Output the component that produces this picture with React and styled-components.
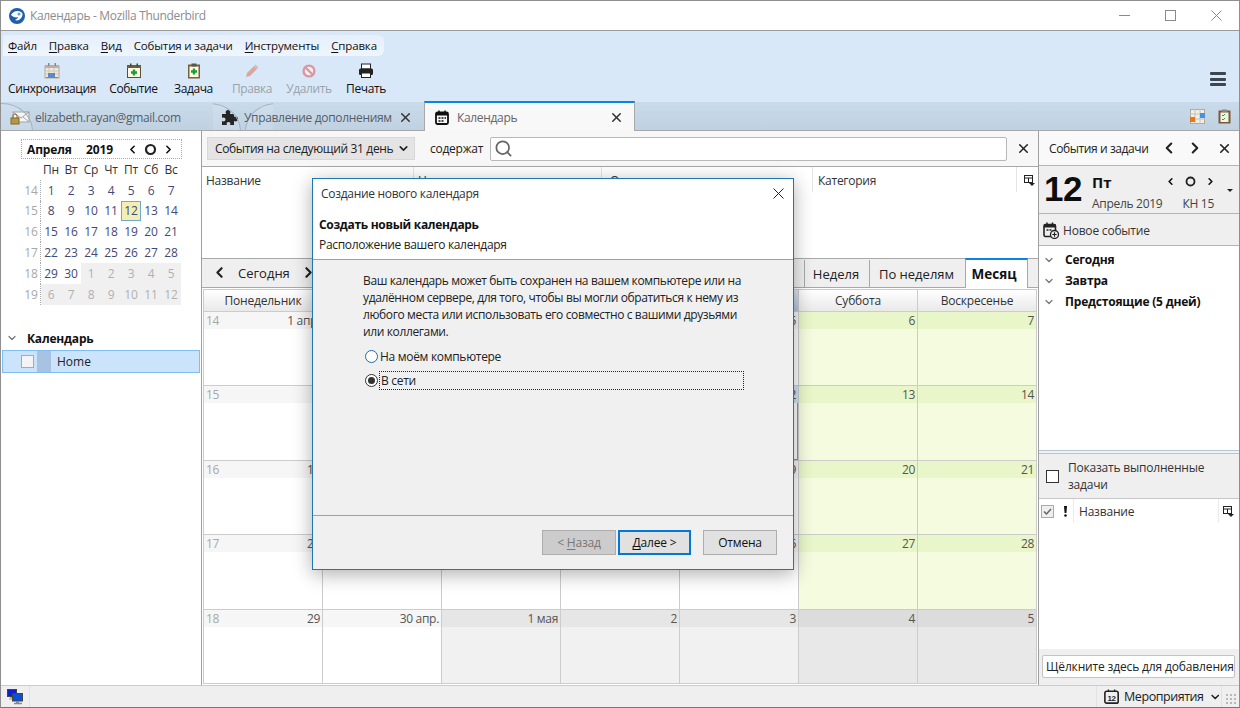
import React from 'react';
import styled, { createGlobalStyle, css } from 'styled-components';
import { X, ChevronLeft, ChevronRight, ChevronDown, Search } from 'lucide-react';

const Global = createGlobalStyle`
  html, body { margin: 0; padding: 0; width: 1240px; height: 708px; overflow: hidden; background: #fff; }
  * { box-sizing: border-box; }
  body { font-family: "Open Sans", "Noto Sans", "Liberation Sans", sans-serif; font-size: 12px; color: #1a1a1a; }
  u { text-underline-offset: 2px; text-decoration-thickness: 1px; }
`;

const Window = styled.div`
  position: relative; width: 1240px; height: 708px; display: flex; flex-direction: column;
  border: 1px solid #8f8f8f; border-bottom: 1px solid #777; overflow: hidden;
`;
const TitleBar = styled.header`
  height: 30px; flex: none; display: flex; align-items: center; background: #fff; padding-left: 8px;
  border-bottom: 1px solid #9a9a9a; gap: 5px;
`;
const TitleText = styled.span` color: #8c8c8c; font-size: 12px; flex: 1; letter-spacing: -0.33px; `;
const WinControls = styled.div` display: flex; align-items: center; height: 100%; `;
const WinBtn = styled.div` width: 46px; height: 100%; display: flex; align-items: center; justify-content: center; `;

const Toolbar = styled.div`
  height: 71px; flex: none; background: #d9e8f8; padding: 4px 2px 0 2px; display: flex; flex-direction: column; position: relative;
`;
const Menu = styled.nav`
  width: 381px; height: 21px; display: flex; align-items: center; padding-left: 5px; gap: 12px;
  background: linear-gradient(#e6f0fb, #eef5fc); border-radius: 0 6px 6px 0; font-size: 11.5px; color: #111; letter-spacing: -0.15px;
`;
const Buttons = styled.div` display: flex; align-items: flex-start; height: 46px; padding-top: 7px; `;
const ToolBtn = styled.div`
  width: ${p => p.$w}px; flex: none; display: flex; flex-direction: column; align-items: center; gap: 1px;
  font-size: 12px; letter-spacing: -0.4px; color: ${p => (p.$off ? '#9aa3ab' : '#111')}; white-space: nowrap;
  svg { display: block; }
`;
const Burger = styled.div`
  position: absolute; right: 13px; top: 41px; width: 16px; display: flex; flex-direction: column; gap: 2.5px;
  i { display: block; height: 3px; background: #3c4650; border-radius: 1px; }
`;

const TabBar = styled.div`
  height: 29px; flex: none; display: flex; align-items: flex-end; background: linear-gradient(#c9dbeb, #c0d2e2);
  position: relative; border-bottom: 1px solid #a8a8a8;
`;
const Tab = styled.div`
  width: ${p => p.$w}px; margin-left: ${p => p.$ml || 0}px; height: 29px; flex: none; display: flex; align-items: center; gap: ${p => p.$gap || 5}px;
  padding: 4px ${p => p.$pr ?? 10}px 0 ${p => p.$pl || 10}px; color: #555e68; font-size: 12px; letter-spacing: -0.33px; position: relative; overflow: hidden;
  white-space: nowrap;
  ${p => p.$active && css`
    background: #f8f8f8; border-top: 2px solid #0a84e0; border-left: 1px solid #a8a8a8; border-right: 1px solid #a8a8a8; height: 30px; margin-bottom: -1px;
    color: #666; padding-top: 1px;
  `}
`;
const TabLabel = styled.span` flex: 1; overflow: hidden; white-space: nowrap; position: relative; `;
const TabGlow = styled.span` position: absolute; left: 0; top: 0; width: ${p => p.$w}px; height: 100%; overflow: hidden; pointer-events: none; `;
const TabArc = styled.span`
  position: absolute; left: ${p => p.$x}px; top: 2px; width: 62px; height: 56px; border-radius: 50%;
  border: 1px solid #a3b3c2; background: rgba(255,255,255,.12); display: block;
`;
const TabTools = styled.div` position: absolute; right: 8px; top: 7px; display: flex; gap: 13px; align-items: center; `;

const Body = styled.div` flex: 1; min-height: 0; display: grid; grid-template-columns: 201px 1fr 201px; `;

const Side = styled.aside` background: #fff; border-right: 1px solid #a0a0a0; padding: 8px 0 0 0; display: flex; flex-direction: column; `;
const MiniHead = styled.div`
  margin-left: 20px; width: 161px; height: 20px; flex: none; border: 1px dotted #aaa; display: flex; align-items: center; padding: 0 6px 0 5px;
  font-weight: 700; font-size: 12px; letter-spacing: -0.15px; color: #111;
`;
const Month = styled.span` width: 59px; `;
const Year = styled.span` width: 40px; `;
const MiniNav = styled.div` flex: 1; display: flex; align-items: center; justify-content: space-between; color: #111; `;
const MiniGrid = styled.div`
  margin-left: 21px; width: 161px; display: grid; grid-template-columns: 19px repeat(7, 20px); grid-auto-rows: 20.8px; font-size: 12px; letter-spacing: -0.2px;
`;
const MiniCell = styled.div`
  display: flex; align-items: center; justify-content: center; color: ${p => p.$color};
  ${p => p.$wk && 'border-right: 1px dotted #aaa; color: #a8a8a8;'}
  ${p => p.$gray && 'background: #f0f0f0;'}
  ${p => p.$today && 'background: #f3efb4; box-shadow: inset 0 0 0 1px #6fa8d2;'}
`;
const CalTree = styled.div` margin-top: 22px; display: flex; flex-direction: column; `;
const CalHead = styled.div` height: 22px; display: flex; align-items: center; padding: 1px 0 0 5px; gap: 9px; font-weight: 700; letter-spacing: -0.2px; color: #111; `;
const CalRow = styled.div`
  margin: 1px 1px 0 1px; height: 23px; background: #cce4fb; border: 1px solid #7fbdf2; display: flex; align-items: center; padding-left: 18px; color: #222;
`;
const Check = styled.span`
  width: 13px; height: 13px; flex: none; border: 1px solid #aaa; background: #f4f4f4; display: block;
`;
const Swatch = styled.span` width: 14px; height: 21px; background: #a8c2e2; margin: 0 6px 0 3px; display: block; `;

const Main = styled.main` display: flex; flex-direction: column; min-width: 0; background: #fff; `;
const Filter = styled.div` height: 36px; flex: none; display: flex; align-items: center; background: #f7f7f7; padding: 0 0 0 5px; border-bottom: 1px solid #a8a8a8; `;
const Select = styled.div`
  width: 208px; height: 23px; background: #e4e4e4; border: 1px solid #d8d8d8; display: flex; align-items: center; justify-content: space-between;
  padding: 0 4px 0 7px; letter-spacing: -0.35px; color: #222; font-size: 12px; white-space: nowrap;
`;
const Contains = styled.span` margin-left: 15px; width: 60px; letter-spacing: -0.25px; color: #222; `;
const SearchBox = styled.div`
  width: 517px; height: 24px; border: 1px solid #b8b8b8; background: #fff; border-radius: 2px; display: flex; align-items: center; padding-left: 3px; color: #666;
`;
const FilterClose = styled.div` margin-left: 9px; display: flex; color: #222; `;

const EventList = styled.div` height: 91px; flex: none; background: #fff; display: flex; align-items: flex-start; `;
const ColHead = styled.div`
  width: ${p => p.$w}px; height: 25px; flex: none; display: flex; align-items: center; padding: 2px 0 0 ${p => p.$pl || 4}px;
  border-right: 1px solid ${p => (p.$nb ? 'transparent' : '#e4e4e4')}; letter-spacing: -0.25px; color: #333;
`;

const NavRow = styled.div`
  height: 30px; flex: none; background: #efefef; border-top: 1px solid #a8a8a8; border-bottom: 1px solid #a8a8a8; display: flex; align-items: flex-end; justify-content: space-between; padding-right: 10px;
`;
const NavLeft = styled.div` height: 100%; display: flex; align-items: center; padding-left: 9px; gap: 10px; font-size: 13px; color: #222; padding-bottom: 1px; `;
const ViewTabs = styled.div` display: flex; align-items: flex-end; height: 100%; `;
const ViewTab = styled.div`
  width: ${p => p.$w}px; height: 27px; display: flex; align-items: center; justify-content: center; border-left: 1px solid #a8a8a8; color: #222; letter-spacing: 0; font-size: 13px; padding-right: 2px;
  ${p => p.$on && css`
    background: #fff; border-top: 2px solid #0a84e0; border-left: 1px solid #a8a8a8; border-right: 1px solid #a8a8a8; height: 30px; margin-bottom: -1px;
    font-weight: 700; color: #111; font-size: 13.5px; padding-right: 5px;
  `}
`;

const MonthGrid = styled.div`
  margin: 1px 1px 1px 1px; flex: 1; display: grid; grid-template-columns: repeat(7, 1fr); grid-template-rows: 21px repeat(5, 1fr);
  border: 1px solid #ccc; border-right: 0; min-height: 0;
`;
const DayName = styled.div`
  display: flex; align-items: center; justify-content: center; border-right: 1px solid #ccc; letter-spacing: -0.2px; font-size: 12px; padding-top: 0;
  background: ${p => (p.$sel ? 'linear-gradient(#dbe7f4, #a9c4e0)' : 'linear-gradient(#fff, #e9e9e9)')}; color: #333;
`;
const Cell = styled.div`
  border-right: 1px solid #ccc; border-top: 1px solid #ccc; display: flex; flex-direction: column;
  background: ${p => p.$body};
  ${p => p.$today && 'box-shadow: inset 0 0 0 1px #5f9fd4;'}
`;
const CellBand = styled.div`
  height: 17px; background: ${p => p.$band}; display: flex; align-items: center; justify-content: space-between; padding: 0 2px 0 2px; color: #555; font-size: 12px; letter-spacing: -0.3px;
`;
const WeekNo = styled.span` color: #a8a8a8; `;

const Pane = styled.aside` border-left: 1px solid #a0a0a0; display: flex; flex-direction: column; background: #fff; min-height: 0; `;
const PaneHead = styled.div` height: 35px; flex: none; background: #f9f9f9; display: flex; align-items: center; padding-left: 10px; letter-spacing: -0.4px; color: #222; font-size: 12px; border-bottom: 1px solid #b4b4b4; `;
const PaneTitle = styled.span` width: 111px; `;
const PaneBtn = styled.span` display: flex; width: ${p => p.$w}px; color: #222; `;
const DateBox = styled.div` height: 48px; flex: none; background: #efefef; border-bottom: 1px solid #b4b4b4; display: flex; padding: 3px 0 0 5px; position: relative; `;
const BigDay = styled.div` font-family: "Liberation Sans", sans-serif; font-weight: 700; font-size: 35px; line-height: 40px; width: 48px; color: #0d0d0d; letter-spacing: -0.5px; `;
const DateInfo = styled.div` flex: 1; display: flex; flex-direction: column; `;
const DateTop = styled.div` display: flex; align-items: center; height: 24px; padding: 1px 23px 0 0; font-weight: 700; font-size: 15px; color: #111; justify-content: space-between; `;
const SmallNav = styled.div` display: flex; align-items: center; gap: 9px; margin-top: -1px; `;
const DateBottom = styled.div` display: flex; justify-content: space-between; padding-right: 25px; color: #444; letter-spacing: -0.3px; font-size: 12px; line-height: 18px; margin-top: 2px; `;
const Caret = styled.i` position: absolute; right: 6px; top: 23px; width: 0; height: 0; border: 3px solid transparent; border-top: 3px solid #222; `;
const NewEvent = styled.div` height: 32px; flex: none; background: #efefef; border-bottom: 1px solid #b4b4b4; display: flex; align-items: center; gap: 4px; padding: 1px 0 0 4px; color: #333; letter-spacing: -0.2px; `;
const Agenda = styled.div` flex: none; height: 204px; padding-top: 3px; display: flex; flex-direction: column; `;
const AgendaRow = styled.div` height: 21px; display: flex; align-items: center; padding-left: 4px; gap: 10px; font-weight: 700; color: #111; letter-spacing: -0.2px; `;
const Splitter = styled.div` height: 4px; flex: none; border-top: 1px solid #b6c4d8; border-bottom: 1px solid #b6c4d8; background: #f2f2f2; `;
const ShowDone = styled.div` height: 45px; flex: none; background: #efefef; display: flex; align-items: center; padding-left: 7px; gap: 9px; border-bottom: 1px solid #c8c8c8; `;
const DoneBox = styled.span` width: 13px; height: 13px; border: 1px solid #333; background: #fff; display: block; flex: none; `;
const DoneText = styled.span` line-height: 17px; letter-spacing: -0.2px; color: #333; width: 160px; `;
const TaskHead = styled.div` height: 24px; flex: none; display: flex; align-items: center; color: #333; `;
const TaskCol = styled.div` width: ${p => p.$w}px; height: 100%; display: flex; align-items: center; justify-content: ${p => p.$left ? 'flex-start' : 'center'}; border-right: 1px solid ${p => p.$nb ? 'transparent' : '#eaeaea'}; padding-left: ${p => p.$left ? 5 : 0}px; letter-spacing: -0.2px; `;
const TaskBody = styled.div` flex: 1; min-height: 0; `;
const AddBar = styled.div` height: 36px; flex: none; background: #efefef; padding: 6px 4px 0 3px; `;
const AddInput = styled.div` height: 23px; background: #fff; border: 1px solid #c4c4c4; border-radius: 2px; display: flex; align-items: center; padding-left: 3px; overflow: hidden; white-space: nowrap; color: #222; letter-spacing: -0.15px; font-size: 12px; `;

const Status = styled.footer` height: 22px; flex: none; background: #efefef; border-top: 1px solid #ccc; display: flex; align-items: center; justify-content: space-between; position: relative; `;
const StatusLeft = styled.div` width: 29px; height: 100%; padding-left: 6px; display: flex; align-items: center; border-right: 1px solid #e2e2e2; `;
const StatusRight = styled.div` width: 126px; display: flex; align-items: center; height: 100%; border-left: 1px solid #e2e2e2; border-right: 1px solid #e2e2e2; padding-left: 7px; gap: 5px; margin-right: 17px; color: #222; font-size: 12.5px; letter-spacing: -0.45px; white-space: nowrap; `;

const Dialog = styled.section`
  position: absolute; left: 311px; top: 177px; width: 482px; height: 392px; background: #f0f0f0; border: 1px solid #1f76b0;
  box-shadow: 0 4px 18px rgba(0,0,0,.32); display: flex; flex-direction: column; z-index: 5;
`;
const DlgTop = styled.div` height: 81px; flex: none; background: #fff; border-bottom: 1px solid #a0a0a0; display: flex; flex-direction: column; `;
const DlgTitle = styled.div` height: 29px; flex: none; display: flex; align-items: center; justify-content: space-between; padding: 0 9px 0 8px; letter-spacing: -0.3px; color: #333; `;
const DlgHeading = styled.div` margin: 8px 0 0 6px; font-weight: 700; letter-spacing: -0.3px; color: #111; line-height: 18px; `;
const DlgSub = styled.div` margin: 2px 0 0 6px; letter-spacing: -0.33px; color: #222; line-height: 18px; `;
const DlgBody = styled.div` flex: 1; padding: 12px 0 0 50px; display: flex; flex-direction: column; border-bottom: 1px solid #a0a0a0; `;
const DlgText = styled.p` margin: 0; width: 390px; line-height: 17px; letter-spacing: -0.37px; color: #222; `;
const RadioRow = styled.div` display: flex; align-items: center; height: 20px; margin-top: ${p => p.$mt}px; margin-left: 2px; gap: 2px; letter-spacing: -0.3px; color: #222; `;
const Radio = styled.span`
  width: 13px; height: 13px; border-radius: 50%; border: 1px solid ${p => p.$on ? '#333' : '#0a70c8'}; background: #fff; display: flex; align-items: center; justify-content: center; flex: none;
  &::after { content: ''; width: 7px; height: 7px; border-radius: 50%; background: ${p => p.$on ? '#333' : 'transparent'}; }
`;
const FocusLabel = styled.span` width: 365px; height: 19px; border: 1px dotted #222; display: flex; align-items: center; padding-left: 1px; margin-left: -1px; `;
const DlgFoot = styled.div` height: 53px; flex: none; display: flex; padding: 14px 0 0 229px; align-items: flex-start; `;
const DlgBtn = styled.div`
  width: ${p => p.$w}px; margin-left: ${p => p.$ml || 0}px; height: 25px; display: flex; align-items: center; justify-content: center; font-size: 12px; letter-spacing: -0.2px;
  background: ${p => p.$off ? '#cccccc' : '#e1e1e1'}; border: ${p => p.$def ? '2px solid #0078d7' : '1px solid #adadad'}; color: ${p => p.$off ? '#777' : '#111'};
`;

const Bird = () => (
  <svg width="16" height="16" viewBox="0 0 16 16"><circle cx="8" cy="8" r="8" fill="#1f5fa8" /><path d="M2 7c2-4 7-5 10-3 2 1 2 4 0 6-1 2-4 3-6 2 2-1 3-2 3-3-2 1-5 0-7-2z" fill="#fff" /><circle cx="10" cy="6" r="1.6" fill="#5fa5e0" /></svg>
);
const SyncIcon = () => (
  <svg width="16" height="16" viewBox="0 0 16 16"><rect x="1" y="3" width="14" height="12" fill="#ece8e0" stroke="#b0a89e" /><rect x="1" y="2" width="14" height="3" fill="#bcaea0" /><rect x="4" y="0" width="1.5" height="3" fill="#888" /><rect x="10.5" y="0" width="1.5" height="3" fill="#888" /><path d="M1 8h14M1 11h14M5 5v10M10 5v10" stroke="#cfc8bc" /><rect x="4" y="10" width="7" height="4" fill="#5f88c2" /><path d="M2 14.500h12" stroke="#5aa06a" /></svg>
);
const EventIcon = () => (
  <svg width="16" height="16" viewBox="0 0 16 16"><rect x="1.5" y="2.500" width="13" height="12" fill="#fff8e4" stroke="#5a5030" /><rect x="1" y="2" width="14" height="3" fill="#6a6038" /><rect x="4" y="0.500" width="1.500" height="3" fill="#444" /><rect x="10.500" y="0.500" width="1.500" height="3" fill="#444" /><path d="M8 6.500v6M5 9.500h6" stroke="#18a030" strokeWidth="2.400" /></svg>
);
const TaskIcon = () => (
  <svg width="16" height="16" viewBox="0 0 16 16"><rect x="2" y="1.500" width="12" height="14" fill="#7a6038" /><rect x="3.500" y="3.500" width="9" height="10.500" fill="#fffbe8" /><rect x="5.500" y="0.500" width="5" height="3" fill="#555" /><path d="M8 5.500v6M5 8.500h6" stroke="#18a030" strokeWidth="2.400" /></svg>
);
const EditIcon = () => (
  <svg width="16" height="16" viewBox="0 0 16 16"><path d="M2 14l1-4 7-7 3 3-7 7z" fill="#d8a8a0" /><path d="M10 3l1.500-1.500 3 3L13 6z" fill="#e0b8b0" /></svg>
);
const DeleteIcon = () => (
  <svg width="16" height="16" viewBox="0 0 16 16"><circle cx="8" cy="8" r="5.400" fill="#fbeef0" stroke="#d59aa4" strokeWidth="2.400" /><path d="M4.500 4.500l7 7" stroke="#d59aa4" strokeWidth="2.400" /></svg>
);
const PrintIcon = () => (
  <svg width="16" height="16" viewBox="0 0 16 16"><rect x="3.500" y="1" width="9" height="5" fill="#fff" stroke="#222" /><rect x="1" y="5.500" width="14" height="6.500" rx="1.500" fill="#222" /><rect x="3.500" y="10" width="9" height="4.500" fill="#fff" stroke="#222" /></svg>
);
const MailIcon = () => (
  <svg width="20" height="16" viewBox="0 0 20 16"><rect x="3" y="2" width="16" height="10" fill="#f4f4f4" stroke="#999" /><path d="M3 2l8 6 8-6M3 12l6-5M19 12l-6-5" fill="none" stroke="#999" /><rect x="1" y="8" width="8" height="6" fill="#b08a28" stroke="#6e5412" /><path d="M3 8V6a2 2 0 014 0v2" fill="none" stroke="#6e5412" /></svg>
);
const PuzzleIcon = () => (
  <svg width="17" height="17" viewBox="0 0 17 17"><path d="M1 5h4c-1-2 0-4 2-4s3 2 2 4h4v3c2-1 4 0 4 2s-2 3-4 2v4H9c1-2 0-3-1.500-3S5 14 6 16H1v-4c2 1 3.500 0 3.500-1.500S3 8 1 9z" fill="#080808" /></svg>
);
const CalTabIcon = () => (
  <svg width="14" height="15" viewBox="0 0 14 15"><rect x="1" y="2.500" width="12" height="11.500" rx="1.500" fill="none" stroke="#111" strokeWidth="1.800" /><rect x="1" y="2.500" width="12" height="3" fill="#111" /><path d="M4 0.500v3M10 0.500v3" stroke="#111" strokeWidth="1.500" /><path d="M3.500 8h2M6.500 8h2M9.500 8h1.500M3.500 11h2M6.500 11h2" stroke="#111" strokeWidth="1.500" /></svg>
);
const ColPick = () => (
  <svg width="11" height="11" viewBox="0 0 11 11"><rect x="0.500" y="0.500" width="8" height="7" fill="#fff" stroke="#222" /><path d="M0.500 3h8M4.500 3v4.500" stroke="#222" /><path d="M5 8h6l-3 3z" fill="#222" /></svg>
);
const GridTool = () => (
  <svg width="15" height="15" viewBox="0 0 15 15"><rect x="0.500" y="0.500" width="14" height="14" fill="#f2efe8" stroke="#b0a89c" /><path d="M5 0v15M10 0v15M0 5h15M0 10h15" stroke="#c8c0b4" /><rect x="0" y="8" width="5" height="5" fill="#e87810" /><rect x="10" y="4" width="5" height="5" fill="#3f94e4" /></svg>
);
const ClipTool = () => (
  <svg width="13" height="15" viewBox="0 0 13 15"><rect x="0.500" y="1.500" width="12" height="13" fill="#7a5a38" /><rect x="2.500" y="3.500" width="8" height="9.500" fill="#f4f4e4" /><rect x="4" y="0.500" width="5" height="2.500" fill="#888" /><path d="M4 6l1 1 2-2M4 10l1 1 2-2" stroke="#38a040" fill="none" /></svg>
);
const NewEvtIcon = () => (
  <svg width="16" height="17" viewBox="0 0 16 17"><rect x="1" y="2.500" width="11.500" height="12" rx="1.500" fill="none" stroke="#222" strokeWidth="1.600" /><rect x="1" y="2.500" width="11.500" height="3" fill="#222" /><path d="M4 0.500v3M9.500 0.500v3M3.500 8h2M6.500 8h2" stroke="#222" strokeWidth="1.500" /><circle cx="11.500" cy="12.500" r="4" fill="#efefef" stroke="#222" strokeWidth="1.300" /><path d="M11.500 10.300v4.400M9.300 12.500h4.400" stroke="#222" strokeWidth="1.200" /></svg>
);
const NetIcon = () => (
  <svg width="16" height="16" viewBox="0 0 16 16"><rect x="0.500" y="0.500" width="9" height="7" fill="#0a20d8" stroke="#444" /><path d="M3 8.500h3v1.500H2" stroke="#999" fill="none" /><rect x="5.500" y="4.500" width="10" height="7.500" fill="#0a50d8" stroke="#444" /><path d="M9 13h3M7 14.500h8" stroke="#888" strokeWidth="1.500" /></svg>
);
const Cal12 = () => (
  <svg width="17" height="17" viewBox="0 0 17 17"><rect x="1" y="2.500" width="15" height="13.500" rx="2" fill="none" stroke="#222" strokeWidth="1.800" /><path d="M5 0.500v3M12 0.500v3" stroke="#222" strokeWidth="1.500" /><text x="8.500" y="13.500" fontSize="9" fontWeight="700" textAnchor="middle" fontFamily="Liberation Sans" fill="#222">12</text></svg>
);
const Grip = styled.span`
  position: absolute; right: 3px; bottom: 3px; width: 11px; height: 11px;
  background: radial-gradient(circle, #b8b8b8 1px, transparent 1.200px) 0 0 / 4px 4px;
`;

const blue = '#3f4a78';
const days = ['Пн', 'Вт', 'Ср', 'Чт', 'Пт', 'Сб', 'Вс'];
const miniRows = [
  [14, [1, 2, 3, 4, 5, 6, 7], 0],
  [15, [8, 9, 10, 11, 12, 13, 14], 0],
  [16, [15, 16, 17, 18, 19, 20, 21], 0],
  [17, [22, 23, 24, 25, 26, 27, 28], 0],
  [18, [29, 30, 1, 2, 3, 4, 5], 2],
  [19, [6, 7, 8, 9, 10, 11, 12], 0, true],
];
const menu = [['Ф', 'айл'], ['П', 'равка'], ['В', 'ид'], ['Событ', 'и', 'я и задачи'], ['И', 'нструменты'], ['С', 'правка']];
const monthHead = ['Понедельник', 'Вторник', 'Среда', 'Четверг', 'Пятница', 'Суббота', 'Воскресенье'];
const weeks = [
  [14, ['1 апр.', '2', '3', '4', '5', '6', '7']],
  [15, ['8', '9', '10', '11', '12', '13', '14']],
  [16, ['15', '16', '17', '18', '19', '20', '21']],
  [17, ['22', '23', '24', '25', '26', '27', '28']],
  [18, ['29', '30 апр.', '1 мая', '2', '3', '4', '5']],
];

function cellColors(w, d) {
  const other = w === 4 && d >= 2;
  const weekend = d >= 5;
  if (w === 1 && d === 4) return { body: '#fff', band: '#cfe3f5' };
  if (other) return weekend ? { body: '#e8e8e8', band: '#dcdcdc' } : { body: '#f1f1f1', band: '#e6e6e6' };
  if (weekend) return { body: '#f4fbdf', band: '#e9f6c9' };
  return { body: '#fff', band: '#f6f6f6' };
}

export default function App() {
  return (
    <Window>
      <Global />
      <TitleBar>
        <Bird />
        <TitleText>Календарь - Mozilla Thunderbird</TitleText>
        <WinControls>
          <WinBtn><svg width="11" height="11" viewBox="0 0 11 11"><path d="M0 5.500h11" stroke="#8a8a8a" /></svg></WinBtn>
          <WinBtn><svg width="11" height="11" viewBox="0 0 11 11"><rect x="0.500" y="0.500" width="10" height="10" fill="none" stroke="#8a8a8a" /></svg></WinBtn>
          <WinBtn><svg width="11" height="11" viewBox="0 0 11 11"><path d="M0.500 0.500l10 10M10.500 0.500l-10 10" stroke="#8a8a8a" /></svg></WinBtn>
        </WinControls>
      </TitleBar>

      <Toolbar>
        <Menu>
          {menu.map((m, i) => (
            <span key={i}>
              {m.length === 3 ? <>{m[0]}<u>{m[1]}</u>{m[2]}</> : <><u>{m[0]}</u>{m[1]}</>}
            </span>
          ))}
        </Menu>
        <Buttons>
          <ToolBtn $w={98}><SyncIcon />Синхронизация</ToolBtn>
          <ToolBtn $w={65}><EventIcon />Событие</ToolBtn>
          <ToolBtn $w={55}><TaskIcon />Задача</ToolBtn>
          <ToolBtn $w={62} $off><EditIcon />Правка</ToolBtn>
          <ToolBtn $w={52} $off><DeleteIcon />Удалить</ToolBtn>
          <ToolBtn $w={62}><PrintIcon />Печать</ToolBtn>
        </Buttons>
        <Burger><i /><i /><i /></Burger>
      </Toolbar>

      <TabBar>
        <Tab $w={212} $pl={9}>
          <TabGlow $w={34}><TabArc $x={-30} /></TabGlow>
          <MailIcon />
          <TabLabel>elizabeth.rayan@gmail.com</TabLabel>
        </Tab>
        <Tab $w={202} $pl={8} $pr={2} $gap={6}>
          <TabGlow $w={60}><TabArc $x={-34} /><TabArc $x={32} /></TabGlow>
          <PuzzleIcon />
          <TabLabel>Управление дополнениями</TabLabel>
          <X size={15} strokeWidth={2.400} color="#333" />
        </Tab>
        <Tab $w={211} $ml={9} $pl={10} $gap={8} $active>
          <CalTabIcon />
          <TabLabel>Календарь</TabLabel>
          <X size={15} strokeWidth={2.400} color="#333" />
        </Tab>
        <TabTools><GridTool /><ClipTool /></TabTools>
      </TabBar>

      <Body>
        <Side>
          <MiniHead>
            <Month>Апреля</Month>
            <Year>2019</Year>
            <MiniNav>
              <ChevronLeft size={13} strokeWidth={3} />
              <svg width="13" height="13" viewBox="0 0 13 13"><circle cx="6.500" cy="6.500" r="4.500" fill="none" stroke="#222" strokeWidth="2.200" /></svg>
              <ChevronRight size={13} strokeWidth={3} />
            </MiniNav>
          </MiniHead>
          <MiniGrid>
            <MiniCell />
            {days.map(d => <MiniCell key={d} $color="#333">{d}</MiniCell>)}
            {miniRows.map(([wk, ds, start, all], r) => (
              <React.Fragment key={wk}>
                <MiniCell $wk>{wk}</MiniCell>
                {ds.map((d, i) => {
                  const gray = all || (start > 0 && i >= start);
                  const today = r === 1 && i === 4;
                  return <MiniCell key={i} $gray={gray} $today={today} $color={gray ? '#b0b0b0' : blue}>{d}</MiniCell>;
                })}
              </React.Fragment>
            ))}
          </MiniGrid>
          <CalTree>
            <CalHead><ChevronDown size={12} strokeWidth={2.500} color="#777" />Календарь</CalHead>
            <CalRow><Check /><Swatch />Home</CalRow>
          </CalTree>
        </Side>

        <Main>
          <Filter>
            <Select>События на следующий 31 день<ChevronDown size={13} strokeWidth={3} /></Select>
            <Contains>содержат</Contains>
            <SearchBox><Search size={19} strokeWidth={2.200} /></SearchBox>
            <FilterClose><X size={15} strokeWidth={2.400} /></FilterClose>
          </Filter>
          <EventList>
            <ColHead $w={212}>Название</ColHead>
            <ColHead $w={188}>Начало</ColHead>
            <ColHead $w={211} $pl={8}>Окончание</ColHead>
            <ColHead $w={204} $pl={5}>Категория</ColHead>
            <ColHead $w={20} $nb $pl={7}><ColPick /></ColHead>
          </EventList>
          <NavRow>
            <NavLeft><ChevronLeft size={17} strokeWidth={3} />Сегодня<ChevronRight size={17} strokeWidth={3} /></NavLeft>
            <ViewTabs>
              <ViewTab $w={65}>Неделя</ViewTab>
              <ViewTab $w={96}>По неделям</ViewTab>
              <ViewTab $w={63} $on>Месяц</ViewTab>
            </ViewTabs>
          </NavRow>
          <MonthGrid>
            {monthHead.map((h, i) => <DayName key={h} $sel={i === 4}>{h}</DayName>)}
            {weeks.map(([wk, ds], w) => ds.map((d, i) => {
              const c = cellColors(w, i);
              return (
                <Cell key={`${w}-${i}`} $body={c.body} $today={w === 1 && i === 4}>
                  <CellBand $band={c.band}>
                    <WeekNo>{i === 0 ? wk : ''}</WeekNo>
                    <span>{d}</span>
                  </CellBand>
                </Cell>
              );
            }))}
          </MonthGrid>
        </Main>

        <Pane>
          <PaneHead>
            <PaneTitle>События и задачи</PaneTitle>
            <PaneBtn $w={26}><ChevronLeft size={18} strokeWidth={2.800} /></PaneBtn>
            <PaneBtn $w={31}><ChevronRight size={18} strokeWidth={2.800} /></PaneBtn>
            <PaneBtn $w={18}><X size={15} strokeWidth={2.600} /></PaneBtn>
          </PaneHead>
          <DateBox>
            <BigDay>12</BigDay>
            <DateInfo>
              <DateTop>
                Пт
                <SmallNav>
                  <ChevronLeft size={11} strokeWidth={3.500} />
                  <svg width="11" height="11" viewBox="0 0 11 11"><circle cx="5.500" cy="5.500" r="4" fill="none" stroke="#222" strokeWidth="1.800" /></svg>
                  <ChevronRight size={11} strokeWidth={3.500} />
                </SmallNav>
              </DateTop>
              <DateBottom><span>Апрель 2019</span><span>КН 15</span></DateBottom>
            </DateInfo>
            <Caret />
          </DateBox>
          <NewEvent><NewEvtIcon />Новое событие</NewEvent>
          <Agenda>
            <AgendaRow><ChevronDown size={12} strokeWidth={2.500} color="#777" />Сегодня</AgendaRow>
            <AgendaRow><ChevronDown size={12} strokeWidth={2.500} color="#777" />Завтра</AgendaRow>
            <AgendaRow><ChevronDown size={12} strokeWidth={2.500} color="#777" />Предстоящие (5 дней)</AgendaRow>
          </Agenda>
          <Splitter />
          <ShowDone><DoneBox /><DoneText>Показать выполненные задачи</DoneText></ShowDone>
          <TaskHead>
            <TaskCol $w={18} $nb>
              <svg width="13" height="13" viewBox="0 0 13 13"><rect x="0.500" y="0.500" width="12" height="12" fill="#eee" stroke="#aaa" /><path d="M3 6.500l2.500 2.500 4.500-5" fill="none" stroke="#666" strokeWidth="1.500" /></svg>
            </TaskCol>
            <TaskCol $w={17}>
              <svg width="5" height="11" viewBox="0 0 5 11"><path d="M1 0h3l-.6 7H1.600z" fill="#111" /><circle cx="2.500" cy="9.500" r="1.300" fill="#111" /></svg>
            </TaskCol>
            <TaskCol $w={145} $left>Название</TaskCol>
            <TaskCol $w={19} $nb><ColPick /></TaskCol>
          </TaskHead>
          <TaskBody />
          <AddBar><AddInput>Щёлкните здесь для добавления новой задачи</AddInput></AddBar>
        </Pane>
      </Body>

      <Status>
        <StatusLeft><NetIcon /></StatusLeft>
        <StatusRight><Cal12 />Мероприятия<ChevronDown size={14} strokeWidth={3} /></StatusRight>
        <Grip />
      </Status>

      <Dialog>
        <DlgTop>
          <DlgTitle>
            Создание нового календаря
            <svg width="11" height="11" viewBox="0 0 11 11"><path d="M0.500 0.500l10 10M10.500 0.500l-10 10" stroke="#222" /></svg>
          </DlgTitle>
          <DlgHeading>Создать новый календарь</DlgHeading>
          <DlgSub>Расположение вашего календаря</DlgSub>
        </DlgTop>
        <DlgBody>
          <DlgText>Ваш календарь может быть сохранен на вашем компьютере или на удалённом сервере, для того, чтобы вы могли обратиться к нему из любого места или использовать его совместно с вашими друзьями или коллегами.</DlgText>
          <RadioRow $mt={6}><Radio />На моём компьютере</RadioRow>
          <RadioRow $mt={4}><Radio $on /><FocusLabel>В сети</FocusLabel></RadioRow>
        </DlgBody>
        <DlgFoot>
          <DlgBtn $w={74} $off>&lt;&nbsp;<u>Н</u>азад</DlgBtn>
          <DlgBtn $w={73} $ml={2} $def><u>Д</u>алее&nbsp;&gt;</DlgBtn>
          <DlgBtn $w={74} $ml={12}>Отмена</DlgBtn>
        </DlgFoot>
      </Dialog>
    </Window>
  );
}
